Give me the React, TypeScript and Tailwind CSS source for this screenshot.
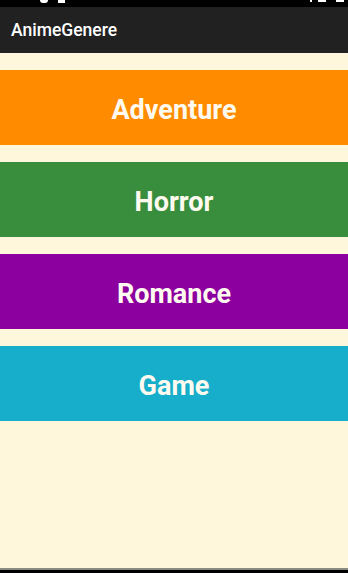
import React from "react";

const genres = [
  { name: "Adventure", color: "bg-[#ff8c00]" },
  { name: "Horror", color: "bg-[#388e3c]" },
  { name: "Romance", color: "bg-[#8b009e]" },
  { name: "Game", color: "bg-[#17aecb]" },
];

export default function App() {
  return (
    <div className="w-[348px] h-[573px] flex flex-col bg-[#fff7dc] overflow-hidden" style={{ fontFamily: "Roboto, 'Liberation Sans', sans-serif" }}>
      <div className="h-[7px] bg-black relative shrink-0">
        <div className="absolute left-[40px] top-0 w-[8px] h-[3px] bg-white rounded-b-full" />
        <div className="absolute left-[58px] top-0 w-[7px] h-[3px] bg-white" />
        <div className="absolute left-[310px] top-0 w-[2px] h-[2px] bg-white" />
        <div className="absolute left-[318px] top-0 w-[8px] h-[2px] bg-white" />
        <div className="absolute left-[336px] top-0 w-[8px] h-[2px] bg-white" />
      </div>
      <div className="h-[46px] bg-[#212121] flex items-center pl-[11px] pt-[1px] shrink-0">
        <span className="text-[17.5px] font-medium text-white">AnimeGenere</span>
      </div>
      <div className="flex-1 flex flex-col gap-[17px] pt-[17px]">
        {genres.map((g) => (
          <div key={g.name} className={`${g.color} h-[75px] flex items-center justify-center pt-[5px]`}>
            <span className="text-[27px] font-bold text-[#fffaf0]">{g.name}</span>
          </div>
        ))}
      </div>
      <div className="h-[2px] bg-[#8a8a80] shrink-0" />
      <div className="h-[3px] bg-black shrink-0" />
    </div>
  );
}
